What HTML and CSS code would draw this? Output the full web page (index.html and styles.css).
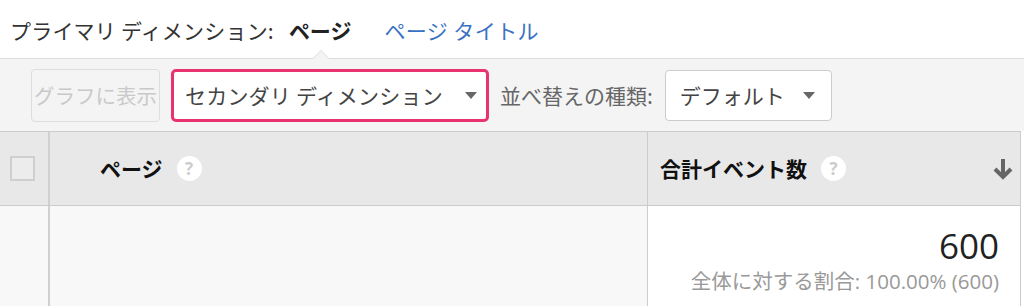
FILE: index.html
```html
<!DOCTYPE html>
<html lang="ja">
<head>
<meta charset="utf-8">
<link rel="stylesheet" href="styles.css">
</head>
<body>
<div class="primary">
  <span class="primary-label">プライマリ ディメンション:</span>
  <span class="primary-current">ページ</span>
  <a class="primary-link">ページ タイトル</a>
</div>
<div class="toolbar">
  <div class="btn-disabled">グラフに表示</div>
  <div class="select select-secondary">
    <span>セカンダリ ディメンション</span>
    <svg class="caret" width="12" height="7" viewBox="0 0 12 7"><path d="M0 0H12L6 7Z" fill="#666"/></svg>
  </div>
  <span class="sort-label">並べ替えの種類:</span>
  <div class="select select-sort">
    <span>デフォルト</span>
    <svg class="caret" width="12" height="7" viewBox="0 0 12 7"><path d="M0 0H12L6 7Z" fill="#666"/></svg>
  </div>
</div>
<div class="table">
  <div class="head-row">
    <div class="cell-check"><span class="checkbox"></span></div>
    <div class="cell-dim"><span class="head-text">ページ</span><span class="help">?</span></div>
    <div class="cell-metric">
      <span class="head-text">合計イベント数</span><span class="help">?</span>
      <svg class="sort-arrow" width="22" height="22" viewBox="0 0 22 22"><path d="M11 1V19M3 11L11 19L19 11" fill="none" stroke="#666" stroke-width="4"/></svg>
    </div>
  </div>
  <div class="body-row">
    <div class="cell-check body-left"></div>
    <div class="cell-dim body-left"></div>
    <div class="cell-metric body-metric">
      <div class="value">600</div>
      <div class="share">全体に対する割合: 100.00% (600)</div>
    </div>
  </div>
</div>
</body>
</html>
```
FILE: styles.css
```css
* { box-sizing: border-box; }
html, body { margin: 0; padding: 0; background: #fff; }
body {
  width: 1024px;
  height: 306px;
  overflow: hidden;
  font-family: "Noto Sans CJK JP", "Noto Sans", sans-serif;
  font-size: 21px;
  color: #333;
}
.primary {
  height: 58px;
  display: flex;
  align-items: center;
  padding-left: 10px;
  padding-top: 2px;
  line-height: 1;
}
.primary-label { color: #333; letter-spacing: 0.2px; }
.primary-current { font-weight: bold; color: #222; margin-left: 15px; }
.primary-link { color: #3a72c2; margin-left: 33px; letter-spacing: 0.4px; }

.toolbar {
  position: relative;
  height: 73px;
  background: #f4f4f4;
  border-top: 1px solid #ddd;
  display: flex;
  align-items: center;
  padding-left: 31px;
  line-height: 1;
}
.toolbar::before,
.toolbar::after {
  content: "";
  position: absolute;
  left: 312px;
  width: 0;
  height: 0;
  border-left: 9px solid transparent;
  border-right: 9px solid transparent;
}
.toolbar::before { top: -9px; border-bottom: 9px solid #ddd; }
.toolbar::after { top: -8px; border-bottom: 9px solid #f4f4f4; }

.btn-disabled {
  width: 129px;
  height: 53px;
  border: 1px solid #ddd;
  border-radius: 4px;
  color: #c9c9c9;
  display: flex;
  align-items: center;
  justify-content: center;
  white-space: nowrap;
  font-size: 20.5px;
  flex-shrink: 0;
}
.select {
  display: flex;
  align-items: center;
  background: #fff;
  color: #444;
  flex-shrink: 0;
}
.select-secondary {
  margin-left: 11px;
  width: 318px;
  height: 53px;
  border: 3px solid #e8336f;
  border-radius: 5px;
  padding-left: 11px;
  letter-spacing: 0.2px;
}
.select-secondary .caret { margin-left: 22px; }
.sort-label {
  margin-left: 11px;
  color: #666;
  white-space: nowrap;
}
.select-sort {
  margin-left: 12px;
  width: 167px;
  height: 51px;
  border: 1px solid #ccc;
  border-radius: 4px;
  padding-left: 14px;
}
.select-sort .caret { margin-left: 18px; }

.table {
  width: 1021px;
  border-top: 1px solid #ccc;
  border-right: 1px solid #ccc;
}
.head-row {
  display: flex;
  height: 74px;
  background: #e8e8e8;
  border-bottom: 1px solid #ccc;
}
.body-row {
  display: flex;
  height: 100px;
}
.cell-check {
  width: 50px;
  border-right: 2px solid #d0d0d0;
  display: flex;
  align-items: center;
  padding-left: 10px;
  flex-shrink: 0;
}
.checkbox {
  width: 25px;
  height: 25px;
  border: 2px solid #cfcfcf;
  background: #ececec;
}
.cell-dim {
  flex: 1;
  display: flex;
  align-items: center;
  padding-left: 50px;
  border-right: 1px solid #ccc;
}
.cell-metric {
  width: 372px;
  flex-shrink: 0;
  display: flex;
  align-items: center;
  padding-left: 12px;
}
.head-text {
  font-weight: bold;
  color: #111;
  line-height: 1;
}
.help {
  width: 25px;
  height: 25px;
  border-radius: 50%;
  background: #fff;
  color: #ccc;
  font-family: "Open Sans", sans-serif;
  font-weight: bold;
  font-size: 17px;
  line-height: 25px;
  text-align: center;
  margin-left: 14px;
}
.sort-arrow { margin-left: auto; margin-right: 6px; }
.body-left { background: #f8f8f8; }
.body-metric {
  background: #fff;
  flex-direction: column;
  align-items: flex-end;
  justify-content: flex-start;
  padding-right: 21px;
  padding-top: 20px;
}
.value {
  font-family: "Open Sans", sans-serif;
  font-size: 35px;
  color: #222;
  line-height: 40px;
}
.share {
  font-family: "Open Sans", "Noto Sans CJK JP", sans-serif;
  font-size: 20.5px;
  color: #999;
  line-height: 26px;
  margin-top: 2px;
}
```
